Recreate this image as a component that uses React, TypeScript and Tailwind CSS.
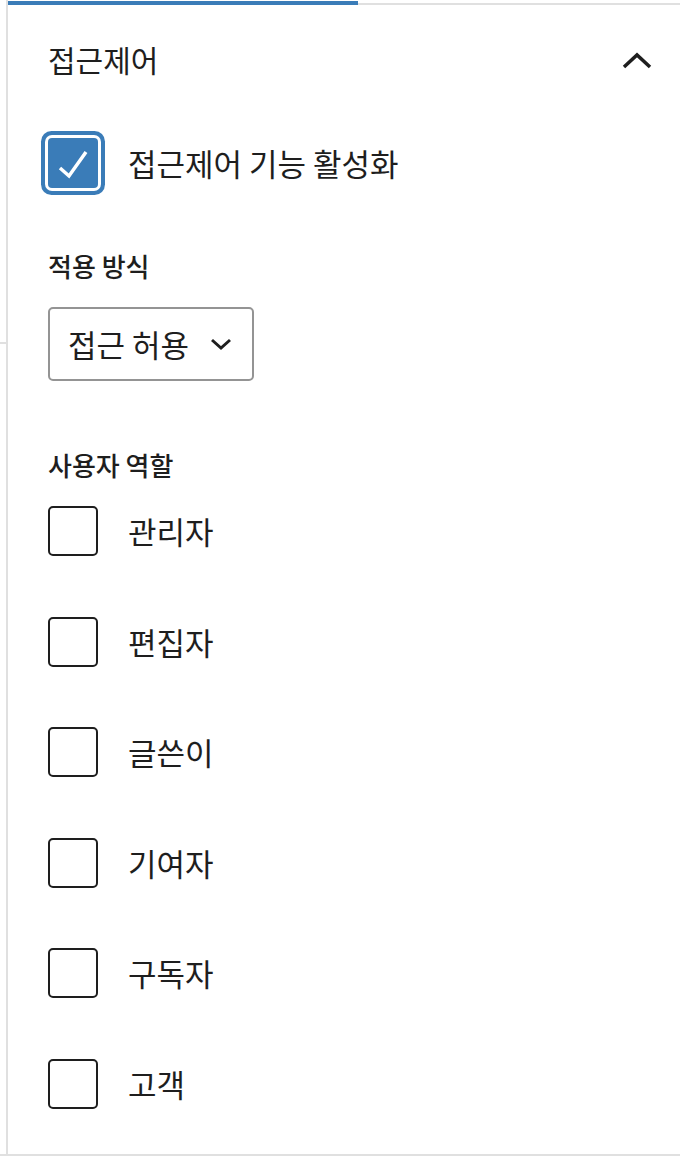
import React from 'react';

const roles = ['관리자', '편집자', '글쓴이', '기여자', '구독자', '고객'];

const font = { fontFamily: '"Noto Sans CJK KR", "Noto Sans", sans-serif' };

function ChevronUp() {
  return (
    <svg width="30" height="18" viewBox="0 0 30 18" fill="none">
      <path d="M2 15 L15 3 L28 15" stroke="#1e1e1e" strokeWidth="3.5" />
    </svg>
  );
}

function ChevronDown() {
  return (
    <svg width="22" height="14" viewBox="0 0 22 14" fill="none">
      <path d="M2 3 L11 11 L20 3" stroke="#1e1e1e" strokeWidth="3" />
    </svg>
  );
}

function Checkbox({ checked }: { checked?: boolean }) {
  if (checked) {
    return (
      <div className="w-[50px] h-[50px] shrink-0 rounded-[4px] bg-[#3a7cb8] shadow-[0_0_0_3px_#fff,0_0_0_7px_#3a7cb8] flex items-center justify-center">
        <svg width="50" height="50" viewBox="0 0 50 50" fill="none">
          <path d="M12 30 L21 38 L38 14" stroke="#fff" strokeWidth="3.5" />
        </svg>
      </div>
    );
  }
  return <div className="w-[50px] h-[50px] shrink-0 rounded-[5px] border-2 border-[#1e1e1e] bg-white" />;
}

export default function App() {
  return (
    <div className="w-[680px] h-[1160px] bg-white text-[#1e1e1e]" style={font}>
      <div className="h-[1156px] flex border-b-2 border-[#e0e0e0]">
        {/* left neighbour strip */}
        <div className="w-[6px] shrink-0 flex flex-col">
          <div className="h-[342px]" />
          <div className="h-[2px] bg-[#e0e0e0]" />
        </div>

        <div className="flex-1 flex flex-col border-l-2 border-[#e0e0e0]">
          {/* tabs */}
          <div className="h-[5px] flex items-end">
            <div className="w-[350px] h-[4px] bg-[#3a7cb8]" />
            <div className="flex-1 h-[2px] bg-[#e0e0e0]" />
          </div>

          {/* panel header */}
          <div className="h-[116px] flex items-center justify-between pl-[40px] pr-[28px]">
            <h2 className="mb-[8px] text-[30px] leading-[38px] font-normal">접근제어</h2>
            <div className="mb-[4px]">
              <ChevronUp />
            </div>
          </div>

          <div className="pl-[40px] flex flex-col">
            <label className="h-[84px] flex items-center gap-[30px]">
              <Checkbox checked />
              <span className="text-[31px] leading-[38px]">접근제어 기능 활성화</span>
            </label>

            <div className="mt-[44px] text-[26px] leading-[34px] font-medium">적용 방식</div>

            <button className="mt-[24px] w-[206px] h-[74px] border-2 border-[#949494] rounded-[5px] flex items-center justify-between pl-[18px] pr-[20px]">
              <span className="text-[31px] leading-[38px]">접근 허용</span>
              <ChevronDown />
            </button>

            <div className="mt-[67px] text-[26px] leading-[34px] font-medium">사용자 역할</div>

            <div className="mt-[24px] flex flex-col gap-[60.5px]">
              {roles.map((role) => (
                <label key={role} className="h-[50px] flex items-center gap-[30px]">
                  <Checkbox />
                  <span className="text-[31px] leading-[38px]">{role}</span>
                </label>
              ))}
            </div>
          </div>
        </div>
      </div>
    </div>
  );
}
